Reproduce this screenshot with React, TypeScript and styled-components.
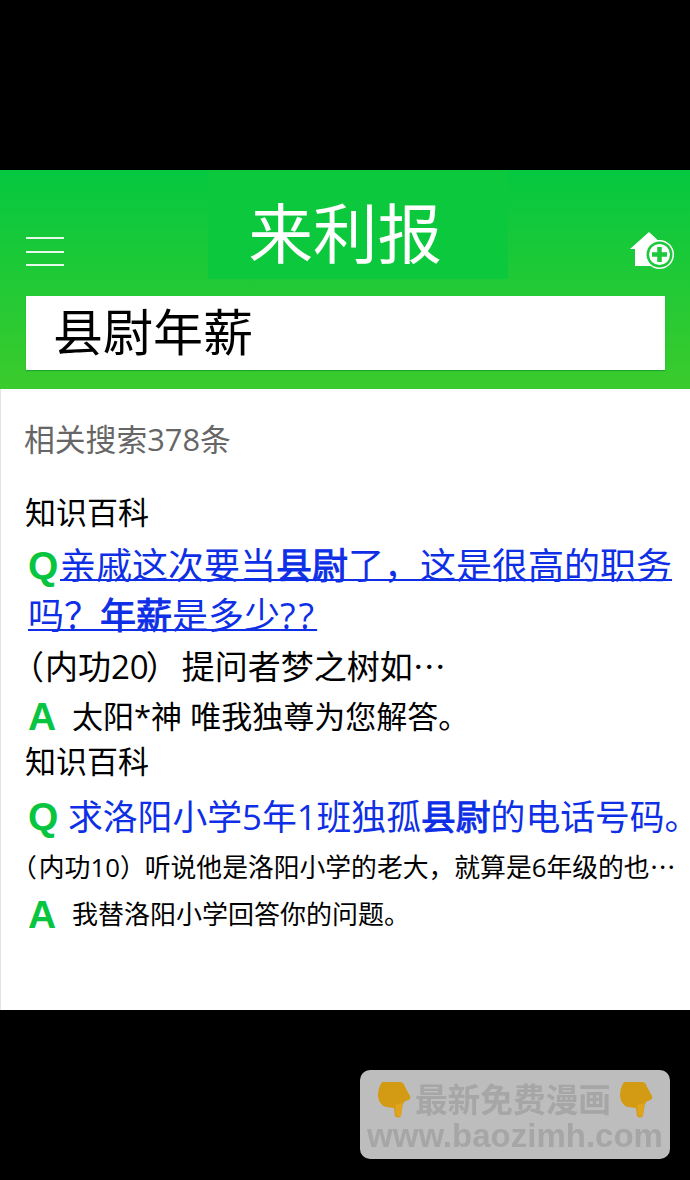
import React from "react";
import styled, { createGlobalStyle } from "styled-components";

const Global = createGlobalStyle`
  html, body { margin: 0; padding: 0; background: #000; }
  body { font-family: "Open Sans", "Noto Sans CJK SC", sans-serif; }
`;
const Page = styled.div`
  width: 690px; height: 1180px; background: #000; display: flex; flex-direction: column; overflow: hidden;
`;
const TopGap = styled.div` height: 170px; flex: none; `;
const Header = styled.header`
  height: 219px; flex: none; box-sizing: border-box; padding: 0 25px 0 26px;
  background: linear-gradient(#05c840, #3bcb2c);
  display: flex; flex-direction: column;
`;
const TitleRow = styled.div`
  height: 126px; display: flex; align-items: flex-end; justify-content: space-between; flex: none;
`;
const Menu = styled.div`
  width: 38px; display: flex; flex-direction: column; gap: 11.5px; margin-bottom: 30px;
  i { display: block; height: 2px; background: #e9f9ea; }
`;
const TitleBox = styled.div`
  width: 300px; height: 109px; background: #0cc83d; margin-left: 21px; margin-bottom: 17px;
  display: flex; justify-content: flex-start; align-items: flex-start; padding-left: 41px; box-sizing: border-box;
`;
const Title = styled.h1`
  margin: 30px 0 0; font-size: 64.5px; line-height: 66px; font-weight: 400; color: #fff; white-space: nowrap;
`;
const HomeIcon = styled.svg`
  width: 44px; height: 38px; margin-bottom: 27px; margin-right: -9px; display: block;
`;
const SearchBox = styled.div`
  height: 74px; flex: none; background: #fff; box-sizing: border-box; padding-left: 27px;
  font-size: 50px; line-height: 72px; color: #000; box-shadow: 0 1px 1px #1aa82c;
`;
const Content = styled.main`
  height: 621px; flex: none; background: #fff; box-sizing: border-box; padding: 30px 0 0 24px;
  border-left: 1px solid #e4e4e4; color: #000;
`;
const Count = styled.div` font-size: 30.8px; line-height: 40px; color: #666; margin-left: -1px; white-space: nowrap; `;
const Section = styled.div` font-size: 31px; line-height: 40px; white-space: nowrap; margin-top: ${(p: { $top: number }) => p.$top}px; `;
const Letter = styled.span`
  font-family: "Liberation Sans", sans-serif; font-weight: 700; color: #07c53f; font-size: 39px; line-height: 1;
  display: inline-block; width: ${(p: { $w: number }) => p.$w}px; vertical-align: baseline;
`;
const Question = styled.div`
  font-size: ${(p: { $size: number; $top: number }) => p.$size}px; line-height: 50px; margin-top: ${(p) => p.$top}px; margin-left: 3px; color: #0e2fe6;
  b { font-weight: 400; -webkit-text-stroke: 1px currentColor; }
`;
const QWrapped = styled(Question)` margin-right: 14px; `;
const QSingle = styled(Question)` white-space: nowrap; `;
const QLink = styled.a`
  color: #0e2fe6; text-decoration: underline; text-decoration-thickness: 2px; text-underline-offset: 0;
`;
const QMarks = styled.span` letter-spacing: 3px; `;
const QPlain = styled.span` color: #0e2fe6; `;
const QStop = styled.span` font-feature-settings: "halt"; `;
const Intro = styled.div`
  font-size: ${(p: { $size: number; $top: number }) => p.$size}px; line-height: 42px; margin-top: ${(p) => p.$top}px; margin-left: 3px; white-space: nowrap;
`;
const Paren = styled.span` margin-left: ${(p: { $l: number; $r: number }) => p.$l}px; margin-right: ${(p) => p.$r}px; `;
const Dots = styled.span` font-family: "Noto Sans CJK SC", sans-serif; `;
const Answer = styled.div`
  display: flex; align-items: center; margin-left: 3px; white-space: nowrap; line-height: 40px;
  font-size: ${(p: { $size: number; $top: number }) => p.$size}px; margin-top: ${(p) => p.$top}px;
`;
const ALetter = styled(Letter)` flex: none; `;
const BottomZone = styled.div`
  flex: 1; display: flex; justify-content: flex-end; align-items: flex-start; padding: 60px 20px 0 0;
`;
const Badge = styled.div`
  width: 310px; height: 89px; border-radius: 10px; background: #bdbdbd; color: #a6a6a6;
  display: flex; flex-direction: column; align-items: center; font-weight: 700; filter: blur(0.4px);
`;
const BadgeTop = styled.div`
  display: flex; align-items: center; gap: 4px; font-size: 32.7px; line-height: 44px; margin-top: 8px; height: 44px; white-space: nowrap;
`;
const BadgeUrl = styled.div`
  font-family: "Liberation Sans", sans-serif; font-weight: 700; font-size: 33px; line-height: 36px; white-space: nowrap; margin-top: -4px;
`;
const HandSvg = styled.svg` width: 34px; height: 38px; flex: none; margin-left: ${(p: { $gap?: number }) => p.$gap ?? 0}px; `;

const Hand = ({ gap }: { gap?: number }) => (
  <HandSvg $gap={gap} viewBox="0 0 34 38">
    <path d="M5 1 L24 1 Q27 2 28 6 L33 15 Q34 18 31 19 L27 21 Q25 24 25 28 L24 35 Q21 38 18 35 L17 27 L9 26 Q2 24 1 15 Q1 7 5 1 Z" fill="#d39a14" />
    <path d="M18 24 L25 22 L24 34 Q21 37 19 34 Z" fill="#e0a51c" />
  </HandSvg>
);

export default function App() {
  return (
    <Page>
      <Global />
      <TopGap />
      <Header>
        <TitleRow>
          <Menu><i /><i /><i /></Menu>
          <TitleBox><Title>来利报</Title></TitleBox>
          <HomeIcon viewBox="0 0 44 38">
            <path d="M0 18 L19 1 L32 13 L24 35 L5 35 L5 18 Z" fill="#fff" />
            <circle cx="29.5" cy="23.5" r="14.5" fill="#fff" />
            <circle cx="29.5" cy="23.5" r="13" fill="#1bc93a" />
            <circle cx="29.5" cy="23.5" r="10.5" fill="#fff" />
            <path d="M29.5 16 V31 M22 23.5 H37" stroke="#1bc93a" strokeWidth="4.5" />
          </HomeIcon>
        </TitleRow>
        <SearchBox>县尉年薪</SearchBox>
      </Header>
      <Content>
        <Count>相关搜索378条</Count>
        <Section $top={33}>知识百科</Section>
        <QWrapped $size={36} $top={9}>
          <Letter $w={32}>Q</Letter>
          <QLink>亲戚这次要当<b>县尉</b>了，这是很高的职务吗？<b>年薪</b>是多少<QMarks>??</QMarks></QLink>
        </QWrapped>
        <Intro $size={33} $top={3}><Paren $l={-17} $r={1}>（</Paren>内功20<Paren $l={-3} $r={3}>）</Paren>提问者梦之树如<Dots>…</Dots></Intro>
        <Answer $size={31} $top={8}>
          <ALetter $w={44}>A</ALetter>太阳*神 唯我独尊为您解答。
        </Answer>
        <Section $top={5}>知识百科</Section>
        <QSingle $size={34.8} $top={11}>
          <Letter $w={40}>Q</Letter>
          <QPlain>求洛阳小学5年1班独孤<b>县尉</b>的电话号码<QStop>。</QStop></QPlain>
        </QSingle>
        <Intro $size={25.8} $top={3}><Paren $l={-17} $r={2}>（</Paren>内功10<Paren $l={0} $r={-1}>）</Paren>听说他是洛阳小学的老大，就算是6年级的也<Dots>…</Dots></Intro>
        <Answer $size={26} $top={6}>
          <ALetter $w={44}>A</ALetter>我替洛阳小学回答你的问题。
        </Answer>
      </Content>
      <BottomZone>
        <Badge>
          <BadgeTop><Hand />最新免费漫画<Hand gap={4} /></BadgeTop>
          <BadgeUrl>www.baozimh.com</BadgeUrl>
        </Badge>
      </BottomZone>
    </Page>
  );
}
